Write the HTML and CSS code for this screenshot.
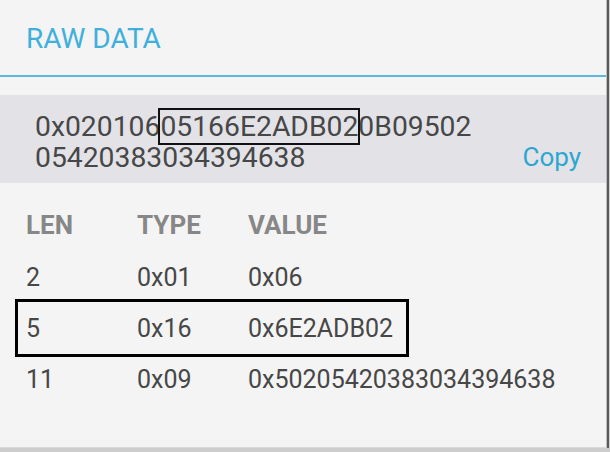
FILE: index.html
```html
<!DOCTYPE html>
<html lang="en">
<head>
  <meta charset="UTF-8">
  <title>Raw Data</title>
  <link rel="stylesheet" href="styles.css">
</head>
<body>
  <div class="dialog">
    <div class="dialog-title">RAW DATA</div>

    <div class="raw-band">
      <div class="raw-hex">0x020106<span class="mark">05166E2ADB02</span>0B09502<br>05420383034394638</div>
      <div class="copy">Copy</div>
    </div>

    <div class="ad-table">
      <div class="ad-row head">
        <span>LEN</span><span>TYPE</span><span>VALUE</span>
      </div>
      <div class="ad-row">
        <span>2</span><span>0x01</span><span>0x06</span>
      </div>
      <div class="ad-row picked">
        <span>5</span><span>0x16</span><span>0x6E2ADB02</span>
      </div>
      <div class="ad-row">
        <span>11</span><span>0x09</span><span>0x50205420383034394638</span>
      </div>
    </div>
  </div>
  <div class="bottom-edge"></div>
</body>
</html>
```

FILE: styles.css
```css
body {
  margin: 0;
  background: #cfcfcf;
  font-family: Roboto, "Noto Sans", sans-serif;
  width: 610px;
  height: 452px;
  overflow: hidden;
}

.dialog {
  width: 606px;
  height: 447px;
  background: #f4f4f4;
  border-right: 1px solid #bdbdbd;
  box-shadow: 2px 0 0 #5a5a5a;
  border-bottom: 1px solid #dadada;
}

.dialog-title {
  height: 77px;
  box-sizing: border-box;
  padding: 22px 0 0 26px;
  font-size: 28px;
  line-height: 34px;
  color: #3fb0dc;
  border-bottom: 2px solid #5cb9e2;
}

.raw-band {
  margin-top: 18px;
  height: 88px;
  background: #e3e3e7;
  display: flex;
  justify-content: space-between;
  align-items: flex-end;
  padding: 0 25px 0 35px;
  box-sizing: border-box;
}

.raw-hex {
  font-size: 28.3px;
  line-height: 31px;
  color: #474747;
  padding-bottom: 10px;
}

.mark {
  outline: 2px solid #111;
}

.copy {
  font-size: 26px;
  line-height: 31px;
  color: #2ea6d2;
  padding-bottom: 10px;
}

.ad-table {
  padding-top: 15px;
}

.ad-row {
  display: grid;
  grid-template-columns: 111px 111px auto;
  padding-left: 26px;
  height: 51px;
  align-items: center;
  font-size: 25px;
  color: #474747;
}

.ad-row.head {
  font-weight: bold;
  color: #878787;
  font-size: 26px;
  height: 54px;
}

.ad-row.picked {
  width: 394px;
  margin-left: 15px;
  padding-left: 8px;
  box-sizing: border-box;
  border: 3px solid #000;
  height: 58px;
  margin-top: -4px;
  margin-bottom: -3px;
}

.bottom-edge {
  height: 4px;
  background: #cdcdcd;
}
```
